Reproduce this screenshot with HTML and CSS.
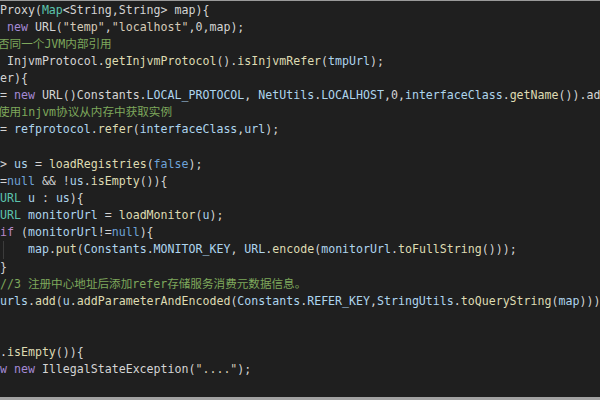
FILE: index.html
```html
<!DOCTYPE html>
<html lang="zh-CN">
  <head>
    <meta charset="UTF-8" />
    <meta name="viewport" content="width=device-width, initial-scale=1.0" />
    <title>createProxy</title>
    <link rel="stylesheet" href="styles.css">
  </head>
  <body>
    <div class="editor">
      <div class="code">
        <div class="line">Proxy(<span class="ty">Map</span>&lt;String,String&gt; map){</div>
        <div class="line"> <span class="kw">new</span> URL(<span class="str">"temp"</span>,<span class="str">"localhost"</span>,0,map);</div>
        <div class="line cut"><span class="cm">否同一个JVM内部引用</span></div>
        <div class="line"> InjvmProtocol.<span class="fn">getInjvmProtocol</span>().<span class="fn">isInjvmRefer</span>(<span class="var">tmpUrl</span>);</div>
        <div class="line">er){</div>
        <div class="line">= <span class="kw">new</span> URL()Constants.<span class="var">LOCAL_PROTOCOL</span>, <span class="var">NetUtils</span>.<span class="var">LOCALHOST</span>,0,<span class="var">interfaceClass</span>.<span class="fn">getName</span>()).addParameters(map);</div>
        <div class="line cut"><span class="cm">使用injvm协议从内存中获取实例</span></div>
        <div class="line">= <span class="var">refprotocol</span>.<span class="fn">refer</span>(<span class="var">interfaceClass</span>,<span class="var">url</span>);</div>
        <div class="line"> </div>
        <div class="line">&gt; <span class="var">us</span> = <span class="fn">loadRegistries</span>(<span class="lit">false</span>);</div>
        <div class="line">=<span class="lit">null</span> &amp;&amp; !<span class="var">us</span>.<span class="fn">isEmpty</span>()){</div>
        <div class="line"><span class="ty">URL</span> <span class="var">u</span> : <span class="var">us</span>){</div>
        <div class="line"><span class="ty">URL</span> <span class="var">monitorUrl</span> = <span class="fn">loadMonitor</span>(<span class="var">u</span>);</div>
        <div class="line"><span class="ctl">if</span> (<span class="var">monitorUrl</span>!=<span class="lit">null</span>){</div>
        <div class="line guide">    <span class="var">map</span>.<span class="fn">put</span>(<span class="var">Constants</span>.<span class="var">MONITOR_KEY</span>, <span class="var">URL</span>.<span class="fn">encode</span>(<span class="var">monitorUrl</span>.<span class="fn">toFullString</span>()));</div>
        <div class="line">}</div>
        <div class="line"><span class="cm">//3 注册中心地址后添加refer存储服务消费元数据信息。</span></div>
        <div class="line"><span class="var">urls</span>.<span class="fn">add</span>(<span class="var">u</span>.<span class="fn">addParameterAndEncoded</span>(<span class="var">Constants</span>.<span class="var">REFER_KEY</span>,<span class="var">StringUtils</span>.<span class="fn">toQueryString</span>(<span class="var">map</span>)));</div>
        <div class="line"> </div>
        <div class="line"> </div>
        <div class="line">.<span class="fn">isEmpty</span>()){</div>
        <div class="line"><span class="kw">w</span> <span class="kw">new</span> IllegalStateException(<span class="str">"...."</span>);</div>
      </div>
    </div>
  </body>
</html>
```

FILE: styles.css
```css
html,
body {
  margin: 0;
  padding: 0;
  width: 600px;
  height: 400px;
  overflow: hidden;
  background: #1f1f1f;
}

.editor {
  box-sizing: border-box;
  width: 600px;
  height: 400px;
  border-top: 1px solid #9a9a9a;
  border-bottom: 3px solid #a2a2a2;
  background: #1f1f1f;
  overflow: hidden;
}

.code {
  padding-top: 0.5px;
  font-family: "DejaVu Sans Mono", "Noto Sans CJK SC", monospace;
  font-size: 11.6px;
  line-height: 17.15px;
  color: #d4d4d4;
}

.line {
  white-space: pre;
  height: 17.15px;
}

/* first glyph is cut by the crop edge */
.cut {
  text-indent: -2px;
}

.guide {
  background: linear-gradient(#3c3c3c, #3c3c3c) 3px 0 / 1px 100% no-repeat;
}

.kw {
  color: #a58ad6;
}

.ctl {
  color: #b888c8;
}

.str {
  color: #d6cbb8;
}

.cm {
  color: #7ea85c;
}

.ty {
  color: #5cc3ad;
}

.lit {
  color: #6ea3d8;
}

.var {
  color: #aed5ee;
}

.fn {
  color: #dedbb2;
}
```
